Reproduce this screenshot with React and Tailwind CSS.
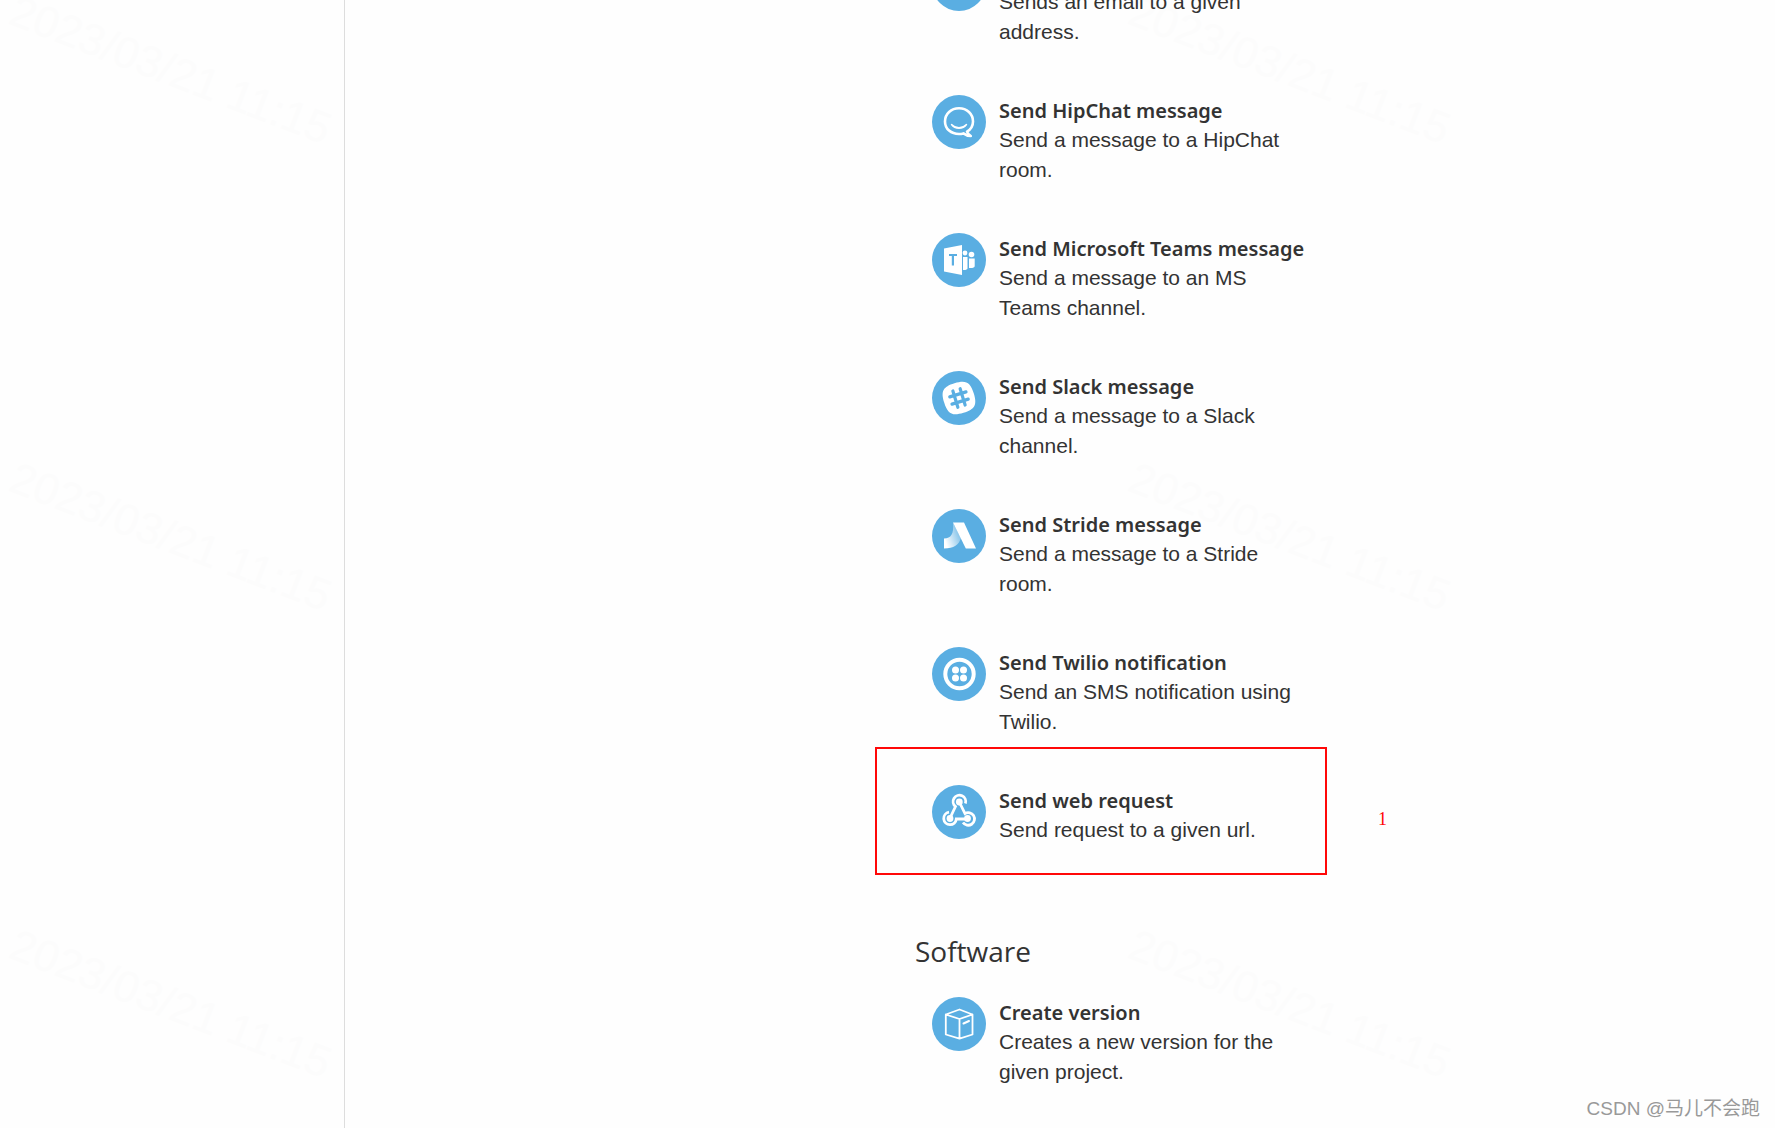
import { useId } from 'react';

function HipChatIcon() {
  return (
    <g fill="none" stroke="#fff" strokeWidth="2.6" strokeLinecap="round" strokeLinejoin="round">
      <path d="M35 36.600C38.600 34.400 41 31 41 26.400C41 18.800 34.800 13.200 27 13.200S13 18.800 13 26.400S19.200 39 27 39c1.600 0 3-.2 4.400-.6C33.500 40 36 41 38.800 41C37 39.800 35.600 38.200 35 36.600Z" />
      <path d="M19.500 29.500c4.200 4.200 10.800 4.200 15 0c-3.400 5-11.600 5-15 0Z" strokeWidth="1.400" fill="#fff" />
    </g>
  );
}

function TeamsIcon() {
  return (
    <g>
      <path fill="#fff" d="M12 15.500L30 12v30l-18-3.500Z" />
      <path fill="#5aaee2" d="M17 21h8v2h-3v9.500h-2.200V23H17Z" />
      <circle cx="33" cy="20" r="2.400" fill="#fff" />
      <circle cx="39.500" cy="21.500" r="2.800" fill="#fff" />
      <path fill="#fff" d="M31 24h4.500v11.500c0 1-2 1.800-4.500 1.500ZM37 25.500h5.700V33c0 1.800-2.200 2.200-5.700 2Z" />
    </g>
  );
}

function SlackIcon() {
  return (
    <g transform="rotate(-17 27 27)">
      <path
        fill="#fff"
        d="M27 11.500c12 0 15.500 3.500 15.500 15.500S39 42.500 27 42.500S11.500 39 11.500 27S15 11.500 27 11.500Z"
      />
      <g stroke="#5aaee2" strokeWidth="3.200" strokeLinecap="round">
        <path d="M23.200 18.500v17M30.800 18.500v17M18.500 23.200h17M18.500 30.800h17" />
      </g>
    </g>
  );
}

function StrideIcon() {
  const id = useId();
  return (
    <g>
      <defs>
        <linearGradient id={id} x1="12" y1="34" x2="29" y2="28" gradientUnits="userSpaceOnUse">
          <stop offset="0.1" stopColor="#fff" />
          <stop offset="1" stopColor="#fff" stopOpacity="0.25" />
        </linearGradient>
      </defs>
      <path fill={`url(#${id})`} d="M21 13.500l8 15.500c-2 6.500-7 10.500-17 10.500v-10c7-.5 10-4 9-16Z" />
      <path fill="#fff" d="M21 13.500h11L44 39.500H33.800Z" />
    </g>
  );
}

function TwilioIcon() {
  return (
    <g fill="#fff">
      <circle cx="27.500" cy="27" r="14.200" fill="none" stroke="#fff" strokeWidth="4" />
      <circle cx="23.500" cy="23" r="3.500" />
      <circle cx="31.500" cy="23" r="3.500" />
      <circle cx="23.500" cy="31" r="3.500" />
      <circle cx="31.500" cy="31" r="3.500" />
    </g>
  );
}

function WebhookIcon() {
  return (
    <g fill="none" stroke="#fff" strokeWidth="2.800">
      <path d="M33.400 18.500A6.300 6.300 0 1 0 23.500 21.500L19 31" />
      <path d="M27.300 17L33 28.500A6.300 6.300 0 1 1 31 37.500" />
      <path d="M17 27.200A6.300 6.300 0 1 0 24.300 34H35" />
      <g fill="#fff" stroke="none">
        <circle cx="27.300" cy="17" r="3.400" />
        <circle cx="18" cy="33.500" r="3.400" />
        <circle cx="35.500" cy="33.500" r="3.400" />
      </g>
    </g>
  );
}

function BoxIcon() {
  return (
    <g fill="none" stroke="#fff" strokeWidth="1.800" strokeLinejoin="round" strokeLinecap="round">
      <path d="M13.800 17.500L27.500 12.500l13 5v20l-13 4.200-13.700-4.200ZM13.800 17.500L27.500 22l13-4.500M27.500 22v19.500" />
      <path d="M31.500 26.500l5.500-2.500" strokeWidth="2" />
    </g>
  );
}

function MailIcon() {
  return (
    <g fill="none" stroke="#fff" strokeWidth="2">
      <rect x="14" y="18" width="26" height="18" rx="1" />
      <path d="M14 19l13 10 13-10" />
    </g>
  );
}

const notifications = [
  { title: 'Send email', text: 'Sends an email to a given address.', Icon: MailIcon },
  { title: 'Send HipChat message', text: 'Send a message to a HipChat room.', Icon: HipChatIcon },
  { title: 'Send Microsoft Teams message', text: 'Send a message to an MS Teams channel.', Icon: TeamsIcon },
  { title: 'Send Slack message', text: 'Send a message to a Slack channel.', Icon: SlackIcon },
  { title: 'Send Stride message', text: 'Send a message to a Stride room.', Icon: StrideIcon },
  { title: 'Send Twilio notification', text: 'Send an SMS notification using Twilio.', Icon: TwilioIcon },
  { title: 'Send web request', text: 'Send request to a given url.', Icon: WebhookIcon, marked: true },
];

const software = [
  { title: 'Create version', text: 'Creates a new version for the given project.', Icon: BoxIcon },
];

// baseline start of each stamp
const stamps = [
  [7, 23],
  [7, 490],
  [7, 957],
  [1126, 23],
  [1126, 490],
  [1126, 957],
];

function ActionItem({ title, text, Icon, marked }) {
  return (
    <li className="relative">
      <button type="button" className="flex w-full items-start gap-[13px] pb-12 pl-4 text-left">
        <svg viewBox="0 0 54 54" className="size-[54px] shrink-0" aria-hidden="true">
          <circle cx="27" cy="27" r="27" fill="#5aaee2" />
          <Icon />
        </svg>
        <span className="block pt-0.5">
          <span className="block whitespace-nowrap font-['Noto_Sans','Open_Sans',sans-serif] text-[20px] leading-7 font-semibold">
            {title}
          </span>
          <span className="block w-[300px] text-[21px] leading-[30px]">{text}</span>
        </span>
      </button>
      {marked && (
        <>
          <div className="pointer-events-none absolute -top-[38px] -left-[41px] h-[128px] w-[452px] border-2 border-[#ff0808]" />
          <span className="absolute top-5 left-[462px] font-['Liberation_Serif',serif] text-[18px] leading-7 text-[#ff0808]">
            1
          </span>
        </>
      )}
    </li>
  );
}

export default function App() {
  return (
    <div className="relative flex h-screen overflow-hidden bg-[#fefefe] font-['Liberation_Sans',Arial,sans-serif] text-[#333333]">
      <svg className="pointer-events-none absolute inset-0 size-full" aria-hidden="true">
        {stamps.map(([x, y]) => (
          <text key={`${x}-${y}`} transform={`translate(${x} ${y}) rotate(21)`} fontSize="44" fill="#fcfcfc">
            2023/03/21 11:15
          </text>
        ))}
      </svg>
      <aside className="w-[345px] shrink-0 border-r border-[#dddddd]" />
      <main className="relative grid flex-1 grid-cols-[570px_1fr]">
        <div />
        <div>
          <ul className="-mt-[43px] pl-px">
            {notifications.map((item) => (
              <ActionItem key={item.title} {...item} />
            ))}
          </ul>
          <h2 className="mt-[38px] mb-[26px] font-['Open_Sans','Noto_Sans',sans-serif] text-[28px] leading-10 font-normal">
            Software
          </h2>
          <ul className="pl-px">
            {software.map((item) => (
              <ActionItem key={item.title} {...item} />
            ))}
          </ul>
        </div>
      </main>
      <div className="absolute right-[15px] bottom-[5px] font-['Liberation_Sans','Noto_Sans_CJK_SC',sans-serif] text-[19px] leading-7 text-[#999999]">
        CSDN @马儿不会跑
      </div>
    </div>
  );
}
